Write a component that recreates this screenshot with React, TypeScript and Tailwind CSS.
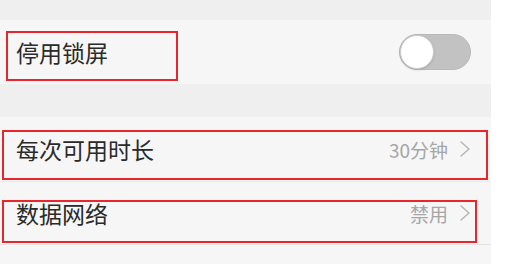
const font = { fontFamily: '"Noto Sans CJK SC", "Noto Sans", sans-serif' };

function Chevron() {
  return (
    <svg width="12" height="20" viewBox="0 0 12 20" fill="none" className="shrink-0">
      <path d="M2 3 L10 10 L2 17" stroke="#b5b5b5" strokeWidth="1.5" strokeLinecap="round" strokeLinejoin="round" />
    </svg>
  );
}

function Toggle() {
  return (
    <div className="w-[72px] h-[36px] rounded-full bg-[#c2c2c2] border border-[#b9b9b9] flex items-center">
      <div className="w-[34px] h-[34px] rounded-full bg-white border border-[#cccccc] shadow-sm" />
    </div>
  );
}

function Box({ className }: { className: string }) {
  return <div className={`absolute border-2 border-[#e8262b] ${className}`} />;
}

export default function App() {
  return (
    <div className="relative w-[512px] h-[264px] flex bg-white overflow-hidden" style={font}>
      <div className="w-[491px] flex flex-col bg-[#efefef]">
        <div className="h-[20px]" />
        <div className="h-[64px] bg-[#f6f6f6] flex items-center justify-between pl-[16px] pr-[20px]">
          <span className="text-[23px] text-[#2a2a2a] leading-none">停用锁屏</span>
          <Toggle />
        </div>
        <div className="h-[33px]" />
        <div className="h-[65px] bg-[#f6f6f6] flex items-center justify-between pl-[16px] pr-[20px] border-b border-[#ebebeb]">
          <span className="text-[23px] text-[#2a2a2a] leading-none">每次可用时长</span>
          <div className="flex items-center gap-[11px]">
            <span className="text-[19px] text-[#a6a6a6] leading-none">30分钟</span>
            <Chevron />
          </div>
        </div>
        <div className="h-[63px] bg-[#f6f6f6] flex items-center justify-between pl-[16px] pr-[20px] border-b border-[#e4e4e4]">
          <span className="text-[23px] text-[#2a2a2a] leading-none">数据网络</span>
          <div className="flex items-center gap-[11px]">
            <span className="text-[19px] text-[#a6a6a6] leading-none">禁用</span>
            <Chevron />
          </div>
        </div>
        <div className="flex-1 bg-[#f6f6f6]" />
      </div>
      <div className="flex-1 bg-white" />

      <Box className="left-[6px] top-[31px] w-[172px] h-[50px]" />
      <Box className="left-[2px] top-[130px] w-[486px] h-[50px]" />
      <Box className="left-[2px] top-[200px] w-[475px] h-[43px]" />
    </div>
  );
}
